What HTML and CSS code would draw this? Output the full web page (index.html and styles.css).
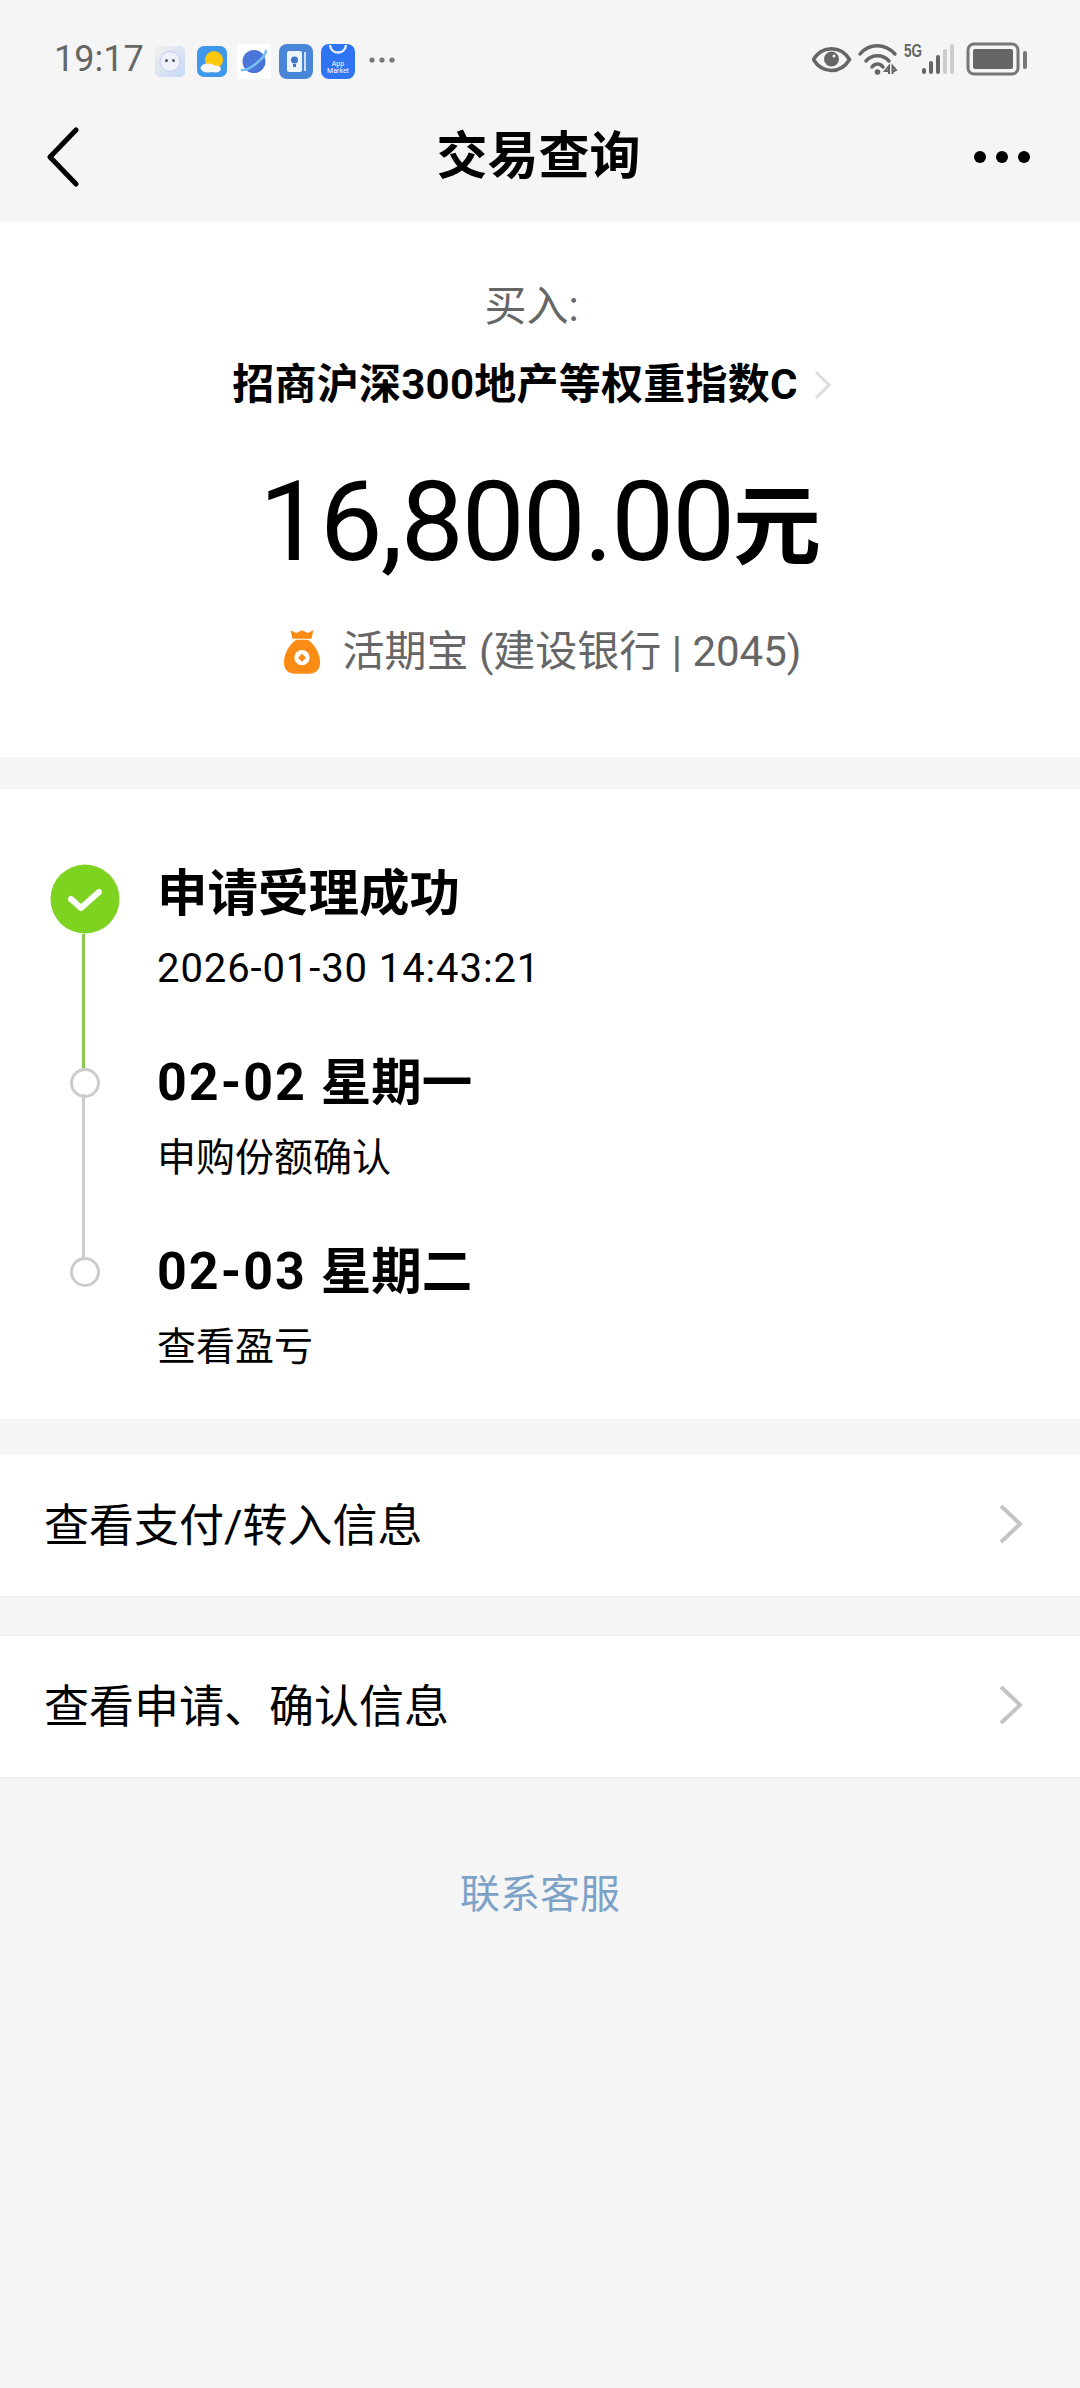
FILE: index.html
```html
<!DOCTYPE html>
<html lang="zh-CN">
<head>
    <meta charset="UTF-8">
    <meta name="viewport" content="width=device-width, initial-scale=1.0">
    <title>交易查询</title>
    <link rel="stylesheet" href="styles.css">
</head>
<body>
    <div class="status-bar">
        <span class="clock">19:17</span>
        <div class="notify-icons">
            <svg class="notify notify-small" width="30" height="31" viewBox="0 0 30 31">
                <defs>
                    <linearGradient id="faceBg" x1="0" y1="0" x2="1" y2="1">
                        <stop offset="0" stop-color="#f3f0ea"/>
                        <stop offset="1" stop-color="#c4d8f8"/>
                    </linearGradient>
                </defs>
                <rect width="30" height="31" rx="5" fill="url(#faceBg)"/>
                <circle cx="15" cy="15.500" r="10" fill="#eef0fa" stroke="#c3cdf0" stroke-width="1"/>
                <circle cx="11.500" cy="14.500" r="1.500" fill="#555"/>
                <circle cx="18.500" cy="14.500" r="1.500" fill="#555"/>
            </svg>
            <svg class="notify notify-weather" width="30" height="31" viewBox="0 0 30 31">
                <rect width="30" height="31" rx="7" fill="#3f98ea"/>
                <circle cx="17" cy="14" r="9" fill="#fdc80e"/>
                <ellipse cx="11" cy="22" rx="7.500" ry="4.500" fill="#f4f6f4"/>
                <ellipse cx="18" cy="23" rx="6" ry="3.500" fill="#f4f6f4"/>
            </svg>
            <svg class="notify" width="34" height="35" viewBox="0 0 34 35">
                <rect width="34" height="35" fill="#fff"/>
                <circle cx="17" cy="17.500" r="11.500" fill="#4a76d8"/>
                <path d="M5 26 C12 27 28 14 29 7" fill="none" stroke="#78c0f4" stroke-width="2.500" stroke-linecap="round"/>
            </svg>
            <svg class="notify" width="34" height="35" viewBox="0 0 34 35">
                <rect width="34" height="35" rx="8" fill="#4a86d8"/>
                <rect x="8" y="7" width="15" height="21" rx="2" fill="#eef4fc"/>
                <rect x="25" y="8" width="2" height="19" fill="#cfe0f6"/>
                <circle cx="15.500" cy="16" r="3.500" fill="#3f76c4"/>
                <rect x="14" y="20" width="3" height="3" fill="#3f76c4"/>
            </svg>
            <svg class="notify" width="34" height="35" viewBox="0 0 34 35">
                <rect width="34" height="35" rx="8" fill="#2f74f2"/>
                <path d="M9 1 C10 11 24 11 25 1" fill="none" stroke="#e6effc" stroke-width="2.500"/>
                <text x="17" y="22" class="market-text">App</text>
                <text x="17" y="29" class="market-text">Market</text>
            </svg>
            <svg class="more-notify" width="26" height="6" viewBox="0 0 26 6">
                <circle cx="3" cy="3" r="2.600" fill="#777"/>
                <circle cx="13" cy="3" r="2.600" fill="#777"/>
                <circle cx="23" cy="3" r="2.600" fill="#777"/>
            </svg>
        </div>
        <svg class="status-icons" width="216" height="34" viewBox="0 0 216 34">
            <!-- eye -->
            <path d="M1.500 17.500 C10 3 29 3 37.500 17.500 C29 32 10 32 1.500 17.500 Z" fill="none" stroke="#666" stroke-width="3.500"/>
            <circle cx="19.500" cy="17" r="7.500" fill="#666"/>
            <circle cx="22" cy="14" r="1.500" fill="#f5f5f5"/>
            <!-- wifi -->
            <path d="M48 12 C57 1 73 1 83 12" fill="none" stroke="#666" stroke-width="3.500" stroke-linecap="round"/>
            <path d="M54 19 C60 12 71 12 77 19" fill="none" stroke="#666" stroke-width="3.500" stroke-linecap="round"/>
            <path d="M60 25 C63 21 68 21 71 25" fill="none" stroke="#666" stroke-width="3.500" stroke-linecap="round"/>
            <circle cx="65.500" cy="30" r="2.800" fill="#666"/>
            <path d="M77 32 V24 L73 29 H77 M80.500 32 V24 L84 28 L80.500 30" fill="none" stroke="#666" stroke-width="2"/>
            <text x="92" y="15" class="net-text" textLength="18" lengthAdjust="spacingAndGlyphs">5G</text>
            <!-- signal -->
            <rect x="110" y="26" width="4" height="6" rx="2" fill="#666"/>
            <rect x="117" y="19" width="4" height="13" rx="2" fill="#666"/>
            <rect x="124" y="13" width="4" height="19" rx="2" fill="#666"/>
            <rect x="131" y="7" width="4" height="25" rx="2" fill="#ccc"/>
            <rect x="138" y="2" width="4" height="30" rx="2" fill="#ccc"/>
            <!-- battery -->
            <rect x="156" y="2" width="50" height="30" rx="6" fill="none" stroke="#777" stroke-width="3"/>
            <rect x="161" y="7" width="40" height="20" rx="2" fill="#666"/>
            <rect x="211" y="9" width="4" height="18" rx="2" fill="#777"/>
        </svg>
    </div>

    <div class="nav-bar">
        <div class="nav-side">
            <svg width="34" height="60" viewBox="0 0 34 60">
                <path d="M29 3 L3 30 L29 57" fill="none" stroke="#000" stroke-width="5" stroke-linecap="round" stroke-linejoin="round"/>
            </svg>
        </div>
        <h1 class="nav-title">交易查询</h1>
        <div class="nav-side nav-side-right">
            <svg width="56" height="12" viewBox="0 0 56 12">
                <circle cx="6" cy="6" r="6" fill="#000"/>
                <circle cx="28" cy="6" r="6" fill="#000"/>
                <circle cx="50" cy="6" r="6" fill="#000"/>
            </svg>
        </div>
    </div>

    <section class="summary">
        <div class="summary-label">买入:</div>
        <div class="fund-name">
            <span>招商沪深300地产等权重指数C</span>
            <svg width="18" height="30" viewBox="0 0 18 30">
                <path d="M2 2 L15 15 L2 28" fill="none" stroke="#ddd" stroke-width="3"/>
            </svg>
        </div>
        <div class="amount">16,800.00<span class="amount-unit">元</span></div>
        <div class="pay-source">
            <svg width="38" height="46" viewBox="0 0 40 48">
                <path d="M8 1 L14 4 L20 1 L26 4 L32 1 L30 10 H10 Z" fill="#fa8c16"/>
                <path d="M14 11 H26 C35 17 39 27 39 35 C39 44 33 47 26 47 H14 C7 47 1 44 1 35 C1 27 5 17 14 11 Z" fill="#fa8c16"/>
                <circle cx="20" cy="30" r="8" fill="#fff"/>
                <rect x="17" y="27" width="6" height="6" transform="rotate(45 20 30)" fill="#fa8c16"/>
            </svg>
            <span>活期宝 (建设银行 | 2045)</span>
        </div>
    </section>

    <section class="timeline">
        <div class="step">
            <div class="rail">
                <svg class="step-done" width="70" height="70" viewBox="0 0 70 70">
                    <circle cx="35" cy="35" r="34.500" fill="#7ed321"/>
                    <path d="M21 35 L31 44 L49 28" fill="none" stroke="#fff" stroke-width="6" stroke-linecap="round" stroke-linejoin="round"/>
                </svg>
                <div class="rail-line rail-line-done"></div>
            </div>
            <div class="step-text">
                <div class="step-title">申请受理成功</div>
                <div class="step-sub step-date">2026-01-30 14:43:21</div>
            </div>
        </div>
        <div class="step">
            <div class="rail">
                <div class="step-dot"></div>
                <div class="rail-line"></div>
            </div>
            <div class="step-text">
                <div class="step-title"><span class="step-day">02-02</span>星期一</div>
                <div class="step-sub">申购份额确认</div>
            </div>
        </div>
        <div class="step">
            <div class="rail">
                <div class="step-dot"></div>
            </div>
            <div class="step-text">
                <div class="step-title"><span class="step-day">02-03</span>星期二</div>
                <div class="step-sub">查看盈亏</div>
            </div>
        </div>
    </section>

    <div class="link-row first">
        <span>查看支付/转入信息</span>
        <svg width="26" height="40" viewBox="0 0 26 40">
            <path d="M3 2 L22 20 L3 38" fill="none" stroke="#c4c4c4" stroke-width="4"/>
        </svg>
    </div>
    <div class="link-row">
        <span>查看申请、确认信息</span>
        <svg width="26" height="40" viewBox="0 0 26 40">
            <path d="M3 2 L22 20 L3 38" fill="none" stroke="#c4c4c4" stroke-width="4"/>
        </svg>
    </div>

    <div class="service">联系客服</div>
</body>
</html>
```

FILE: styles.css
```css
* {
    box-sizing: border-box;
}
body {
    font-family: Roboto, 'Noto Sans CJK SC', sans-serif;
    background: #f5f5f5;
    color: #000;
    margin: 0;
    padding: 0;
    height: 2388px;
    overflow: hidden;
}

/* status bar */
.status-bar {
    height: 88px;
    padding: 30px 52px 0 54px;
    display: flex;
    align-items: flex-start;
}
.clock {
    font-size: 36px;
    line-height: 58px;
    color: #666;
}
.notify-icons {
    display: flex;
    align-items: center;
    height: 58px;
    margin: 2px 0 0 11px;
    gap: 8px;
}
.notify-small {
    margin-right: 4px;
}
.notify-weather {
    margin-right: 2px;
}
.more-notify {
    margin: 0 0 3px 6px;
}
.market-text {
    font-family: Roboto, sans-serif;
    font-size: 7px;
    fill: #fff;
    text-anchor: middle;
}
.net-text {
    font-family: 'Liberation Sans', sans-serif;
    font-size: 18px;
    font-weight: bold;
    fill: #666;
}
.status-icons {
    margin-left: auto;
    margin-top: 12px;
}

/* nav */
.nav-bar {
    height: 134px;
    padding: 3px 50px 0 47px;
    display: flex;
    align-items: center;
}
.nav-side {
    flex: 1;
    display: flex;
    align-items: center;
}
.nav-side-right {
    justify-content: flex-end;
}
.nav-title {
    margin: 0;
    font-size: 51px;
    line-height: 70px;
    font-weight: bold;
}

/* top card */
.summary {
    background: #fff;
    height: 535px;
    padding-top: 51px;
    text-align: center;
}
.summary-label {
    font-size: 42px;
    line-height: 68px;
    color: #666;
    padding-right: 17px;
}
.fund-name {
    margin-top: 9px;
    padding-right: 16px;
    font-size: 42px;
    line-height: 70px;
    font-weight: bold;
    letter-spacing: 0.25px;
    display: flex;
    justify-content: center;
    align-items: center;
    gap: 16px;
}
.amount {
    margin-top: 32px;
    height: 140px;
    font-size: 112px;
    line-height: 140px;
    font-weight: 400;
    letter-spacing: -2px;
}
.amount-unit {
    font-size: 88px;
    font-weight: bold;
    letter-spacing: 0;
    vertical-align: 3px;
}
.pay-source {
    margin-top: 30px;
    padding-left: 4px;
    font-size: 42px;
    line-height: 60px;
    color: #666;
    display: flex;
    justify-content: center;
    align-items: center;
    gap: 22px;
}

/* timeline */
.timeline {
    background: #fff;
    margin-top: 32px;
    height: 630px;
    padding: 68px 0 0 50px;
}
.step {
    display: flex;
    height: 189px;
}
.rail {
    width: 70px;
    flex: none;
    display: flex;
    flex-direction: column;
    align-items: center;
}
.step-done {
    margin-top: 7px;
    flex: none;
}
.step-dot {
    width: 30px;
    height: 30px;
    flex: none;
    margin-top: 22px;
    border: 3px solid #ccc;
    border-radius: 50%;
    background: #fff;
}
.rail-line {
    width: 3px;
    flex: 1;
    margin: -4px 4px -22px 0;
    background: #ccc;
}
.rail-line-done {
    margin-top: 0;
    background: #8cc850;
}
.step-text {
    margin-left: 37px;
}
.step-title {
    margin-top: 2px;
    font-size: 50.500px;
    line-height: 70px;
    font-weight: bold;
}
.step-day {
    font-size: 52px;
    letter-spacing: 2px;
    margin-right: 14px;
}
.step-sub {
    margin-top: 10px;
    font-size: 39px;
    line-height: 60px;
}
.step-date {
    font-size: 40px;
    letter-spacing: 0.900px;
}

/* link rows */
.link-row {
    background: #fff;
    height: 143px;
    margin-top: 38px;
    padding: 0 56px 6px 44px;
    display: flex;
    align-items: center;
    justify-content: space-between;
    font-size: 45px;
    border-top: 1px solid #eee;
    border-bottom: 1px solid #eee;
}
.link-row svg {
    margin-top: 3px;
}
.link-row.first {
    height: 144px;
    margin-top: 34px;
}
.service {
    margin-top: 82px;
    text-align: center;
    font-size: 40px;
    line-height: 70px;
    color: #7da2c8;
}
```
